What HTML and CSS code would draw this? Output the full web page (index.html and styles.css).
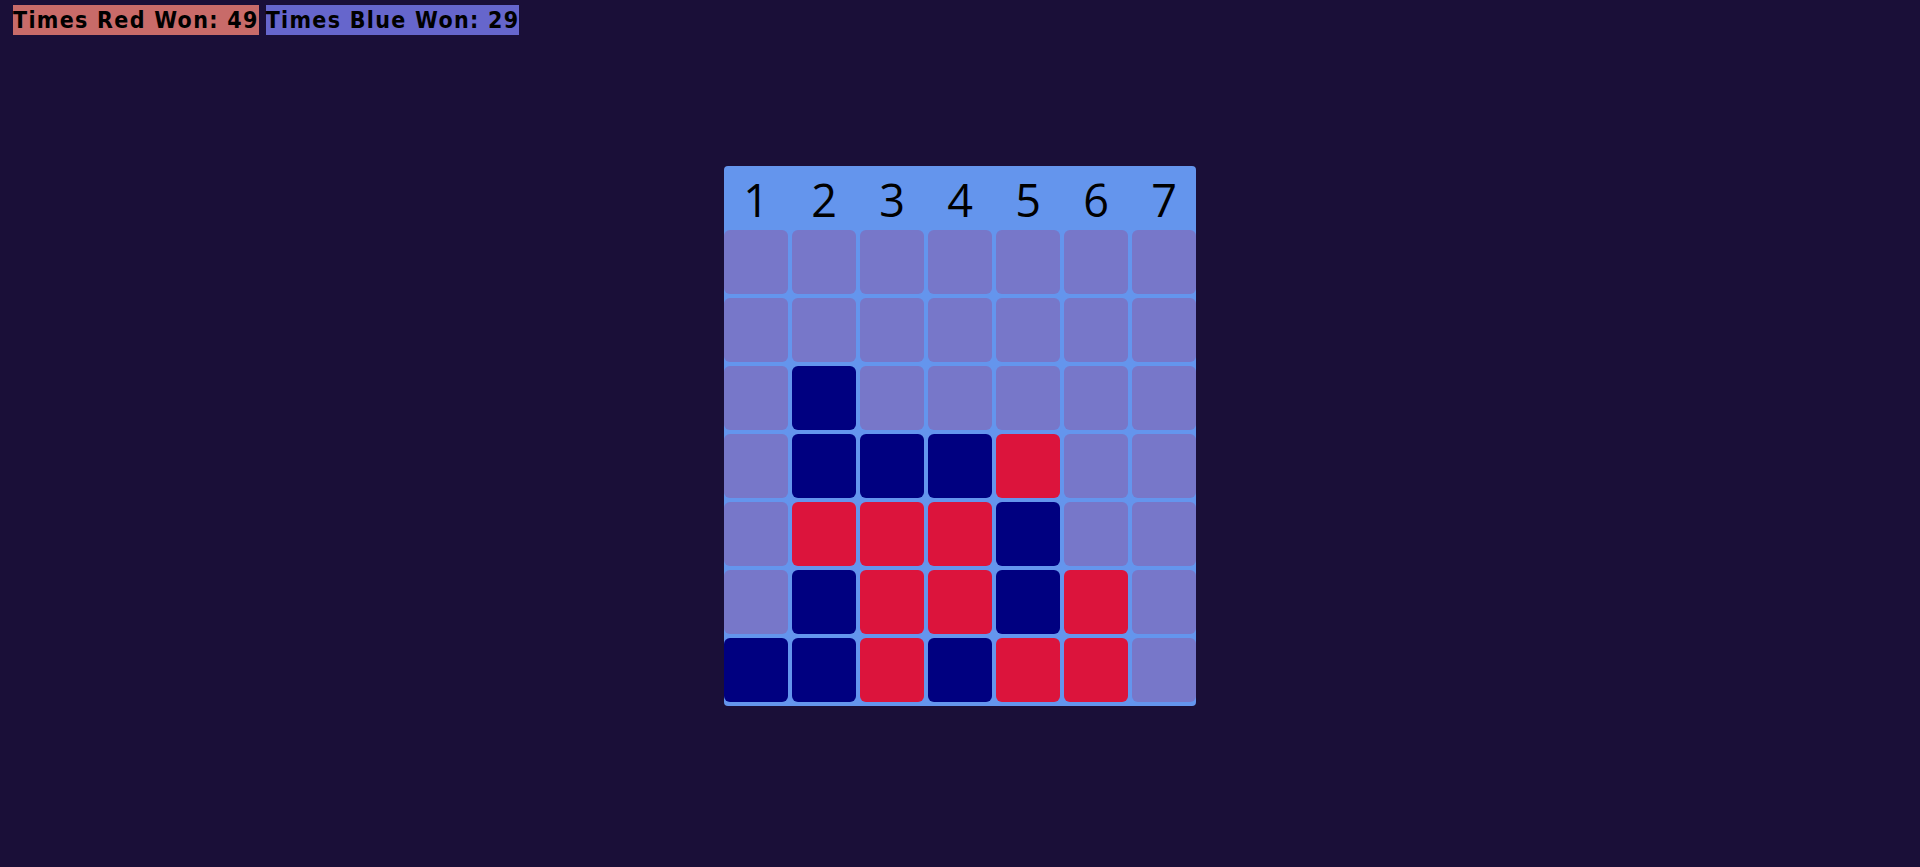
FILE: index.html
```html
<!DOCTYPE html>
<html lang="en">

<head>
    <meta charset="UTF-8">
    <meta name="viewport" content="width=device-width, initial-scale=1.0">
    <title>connect four</title>
    <link rel="stylesheet" href="styles.css">
</head>

<body>
    <div class="scores">
        <span class="score red-score">Times Red Won: 49</span>
        <span class="score blue-score">Times Blue Won: 29</span>
    </div>
    <div class="board">
        <div class="head">
            <span>1</span><span>2</span><span>3</span><span>4</span><span>5</span><span>6</span><span>7</span>
        </div>
        <div class="row">
            <div class="cell"></div><div class="cell"></div><div class="cell"></div><div class="cell"></div><div class="cell"></div><div class="cell"></div><div class="cell"></div>
        </div>
        <div class="row">
            <div class="cell"></div><div class="cell"></div><div class="cell"></div><div class="cell"></div><div class="cell"></div><div class="cell"></div><div class="cell"></div>
        </div>
        <div class="row">
            <div class="cell"></div><div class="cell blue"></div><div class="cell"></div><div class="cell"></div><div class="cell"></div><div class="cell"></div><div class="cell"></div>
        </div>
        <div class="row">
            <div class="cell"></div><div class="cell blue"></div><div class="cell blue"></div><div class="cell blue"></div><div class="cell red"></div><div class="cell"></div><div class="cell"></div>
        </div>
        <div class="row">
            <div class="cell"></div><div class="cell red"></div><div class="cell red"></div><div class="cell red"></div><div class="cell blue"></div><div class="cell"></div><div class="cell"></div>
        </div>
        <div class="row">
            <div class="cell"></div><div class="cell blue"></div><div class="cell red"></div><div class="cell red"></div><div class="cell blue"></div><div class="cell red"></div><div class="cell"></div>
        </div>
        <div class="row">
            <div class="cell blue"></div><div class="cell blue"></div><div class="cell red"></div><div class="cell blue"></div><div class="cell red"></div><div class="cell red"></div><div class="cell"></div>
        </div>
    </div>
</body>

</html>
```

FILE: styles.css
```css
body {
    background-color: #1a0f38;
    margin: 0;
    padding: 5px 13px;
}

.scores {
    display: flex;
    gap: 7px;
}

.score {
    font-family: "DejaVu Sans Condensed", "DejaVu Sans", sans-serif;
    font-stretch: condensed;
    font-weight: bold;
    font-size: 23px;
    letter-spacing: 1.3px;
    line-height: 30px;
    height: 30px;
    color: black;
}

.red-score {
    background-color: #c86b69;
}

.blue-score {
    background-color: #6666cc;
}

.board {
    width: 472px;
    margin: 131px auto 0;
    background-color: #6495ed;
    border-radius: 4px;
    padding-bottom: 4px;
}

.head {
    display: flex;
    gap: 4px;
    height: 64px;
}

.head span {
    width: 64px;
    text-align: center;
    font-family: "Open Sans", "Noto Sans", sans-serif;
    font-size: 45px;
    line-height: 68px;
    color: black;
}

.row {
    display: flex;
    gap: 4px;
    margin-bottom: 4px;
}

.row:last-child {
    margin-bottom: 0;
}

.cell {
    width: 64px;
    height: 64px;
    border-radius: 6px;
    background-color: #7777c9;
}

.cell.red {
    background-color: crimson;
}

.cell.blue {
    background-color: navy;
}
```
